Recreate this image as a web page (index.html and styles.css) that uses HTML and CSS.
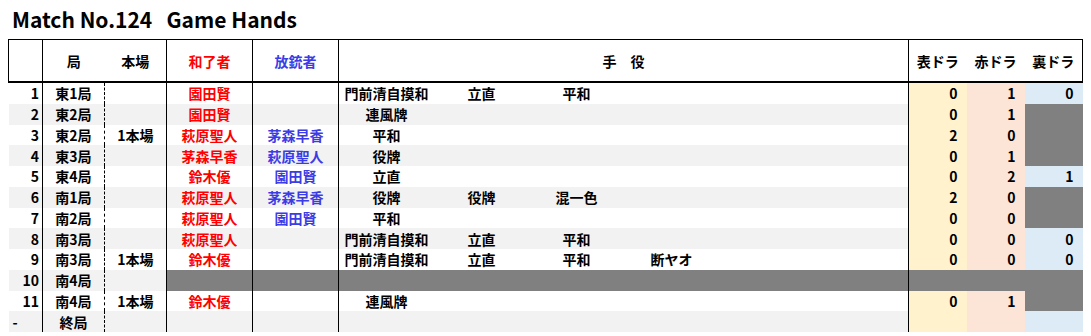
FILE: index.html
```html
<!DOCTYPE html>
<html lang="ja">
<head>
<meta charset="utf-8">
<title>Match No.124 Game Hands</title>
<link rel="stylesheet" href="styles.css">
</head>
<body>
<h1 class="title">Match No.124&nbsp;&nbsp;&nbsp;Game Hands</h1>
<table class="hands">
  <colgroup>
    <col class="c-no"><col class="c-kyoku"><col class="c-honba"><col class="c-name"><col class="c-name"><col class="c-yaku"><col class="c-dora"><col class="c-dora"><col class="c-dora">
  </colgroup>
  <thead>
    <tr>
      <th class="h-no"></th>
      <th class="h-kyoku">局</th>
      <th class="h-honba">本場</th>
      <th class="h-win">和了者</th>
      <th class="h-deal">放銃者</th>
      <th class="h-yaku">手　役</th>
      <th class="h-dora1">表ドラ</th>
      <th class="h-dora2">赤ドラ</th>
      <th class="h-dora3">裏ドラ</th>
    </tr>
  </thead>
  <tbody>
    <tr class="odd">
      <td class="no">1</td><td class="kyoku">東1局</td><td class="honba"></td><td class="win">園田賢</td><td class="deal"></td>
      <td class="yaku"><div class="yl"><span>門前清自摸和</span><span>立直</span><span>平和</span></div></td>
      <td class="d1">0</td><td class="d2">1</td><td class="d3">0</td>
    </tr>
    <tr class="even">
      <td class="no">2</td><td class="kyoku">東2局</td><td class="honba"></td><td class="win">園田賢</td><td class="deal"></td>
      <td class="yaku"><div class="yl"><span>連風牌</span></div></td>
      <td class="d1">0</td><td class="d2">1</td><td class="d3 na"></td>
    </tr>
    <tr class="odd">
      <td class="no">3</td><td class="kyoku">東2局</td><td class="honba">1本場</td><td class="win">萩原聖人</td><td class="deal">茅森早香</td>
      <td class="yaku"><div class="yl"><span>平和</span></div></td>
      <td class="d1">2</td><td class="d2">0</td><td class="d3 na"></td>
    </tr>
    <tr class="even">
      <td class="no">4</td><td class="kyoku">東3局</td><td class="honba"></td><td class="win">茅森早香</td><td class="deal">萩原聖人</td>
      <td class="yaku"><div class="yl"><span>役牌</span></div></td>
      <td class="d1">0</td><td class="d2">1</td><td class="d3 na"></td>
    </tr>
    <tr class="odd">
      <td class="no">5</td><td class="kyoku">東4局</td><td class="honba"></td><td class="win">鈴木優</td><td class="deal">園田賢</td>
      <td class="yaku"><div class="yl"><span>立直</span></div></td>
      <td class="d1">0</td><td class="d2">2</td><td class="d3">1</td>
    </tr>
    <tr class="even">
      <td class="no">6</td><td class="kyoku">南1局</td><td class="honba"></td><td class="win">萩原聖人</td><td class="deal">茅森早香</td>
      <td class="yaku"><div class="yl"><span>役牌</span><span>役牌</span><span>混一色</span></div></td>
      <td class="d1">2</td><td class="d2">0</td><td class="d3 na"></td>
    </tr>
    <tr class="odd">
      <td class="no">7</td><td class="kyoku">南2局</td><td class="honba"></td><td class="win">萩原聖人</td><td class="deal">園田賢</td>
      <td class="yaku"><div class="yl"><span>平和</span></div></td>
      <td class="d1">0</td><td class="d2">0</td><td class="d3 na"></td>
    </tr>
    <tr class="even">
      <td class="no">8</td><td class="kyoku">南3局</td><td class="honba"></td><td class="win">萩原聖人</td><td class="deal"></td>
      <td class="yaku"><div class="yl"><span>門前清自摸和</span><span>立直</span><span>平和</span></div></td>
      <td class="d1">0</td><td class="d2">0</td><td class="d3">0</td>
    </tr>
    <tr class="odd">
      <td class="no">9</td><td class="kyoku">南3局</td><td class="honba">1本場</td><td class="win">鈴木優</td><td class="deal"></td>
      <td class="yaku"><div class="yl"><span>門前清自摸和</span><span>立直</span><span>平和</span><span>断ヤオ</span></div></td>
      <td class="d1">0</td><td class="d2">0</td><td class="d3">0</td>
    </tr>
    <tr class="even">
      <td class="no">10</td><td class="kyoku">南4局</td><td class="honba"></td><td class="win na"></td><td class="deal na"></td>
      <td class="yaku na"></td>
      <td class="d1 na"></td><td class="d2 na"></td><td class="d3 na"></td>
    </tr>
    <tr class="odd">
      <td class="no">11</td><td class="kyoku">南4局</td><td class="honba">1本場</td><td class="win">鈴木優</td><td class="deal"></td>
      <td class="yaku"><div class="yl"><span>連風牌</span></div></td>
      <td class="d1">0</td><td class="d2">1</td><td class="d3 na"></td>
    </tr>
    <tr class="even">
      <td class="no dash">-</td><td class="kyoku">終局</td><td class="honba"></td><td class="win"></td><td class="deal"></td>
      <td class="yaku"></td>
      <td class="d1"></td><td class="d2"></td><td class="d3"></td>
    </tr>
  </tbody>
</table>
</body>
</html>
```

FILE: styles.css
```css
html, body {
  margin: 0;
  padding: 0;
  background: #ffffff;
}

body {
  font-family: "Noto Sans CJK JP", "Noto Sans", sans-serif;
  color: #000000;
}

.title {
  margin: 0;
  height: 39px;
  box-sizing: border-box;
  padding: 6px 0 0 12px;
  font-size: 21px;
  line-height: 26px;
  font-weight: 700;
  white-space: pre;
}

.hands {
  margin-left: 8px;
  border-collapse: collapse;
  table-layout: fixed;
  width: 1074px;
  font-size: 14px;
  font-weight: 700;
}

.c-no { width: 34px; }
.c-kyoku { width: 62px; }
.c-honba { width: 62px; }
.c-name { width: 86px; }
.c-yaku { width: 570px; }
.c-dora { width: 58px; }

.hands th {
  height: 41px;
  padding: 0;
  border-top: 1px solid #000;
  border-bottom: 2px solid #000;
  font-weight: 700;
  text-align: center;
  vertical-align: middle;
  line-height: 18px;
}

.h-no { border-left: 1px solid #000; border-right: 1px solid #000; }
.h-honba { border-right: 1px solid #000; }
.h-win { color: #ff0000; border-right: 1px solid #000; }
.h-deal { color: #3c3ce6; border-right: 1px solid #000; }
.h-yaku { border-right: 1px solid #000; }
.h-dora3 { border-right: 1px solid #000; }

.hands td {
  height: 20.75px;
  padding: 0;
  line-height: 18px;
  vertical-align: middle;
  white-space: nowrap;
  overflow: hidden;
}

.hands tr.even td { background: #f2f2f2; }
.hands tr.odd td { background: #ffffff; }

.hands td.no {
  text-align: right;
  padding-right: 3px;
  border-right: 1px solid #000;
}
.hands td.no.dash {
  text-align: left;
  padding-left: 4px;
  padding-right: 0;
}

.hands td.kyoku {
  text-align: center;
  border-right: 1px dashed #000;
}
.hands td.honba {
  text-align: center;
  border-right: 1px solid #000;
}
.hands td.win {
  text-align: center;
  color: #ff0000;
  border-right: 1px solid #000;
}
.hands td.deal {
  text-align: center;
  color: #3c3ce6;
  border-right: 1px solid #000;
}
.hands td.yaku {
  border-right: 1px solid #000;
}

.yl {
  display: grid;
  grid-template-columns: repeat(6, 95px);
}
.yl span {
  text-align: center;
}

.hands td.d1, .hands td.d2, .hands td.d3 {
  text-align: right;
  padding-right: 9px;
}
.hands tr td.d1 { background: #fff2cc; }
.hands tr td.d2 { background: #fce4d6; }
.hands tr td.d3 { background: #ddebf7; }

.hands tr td.na { background: #808080; }
```
